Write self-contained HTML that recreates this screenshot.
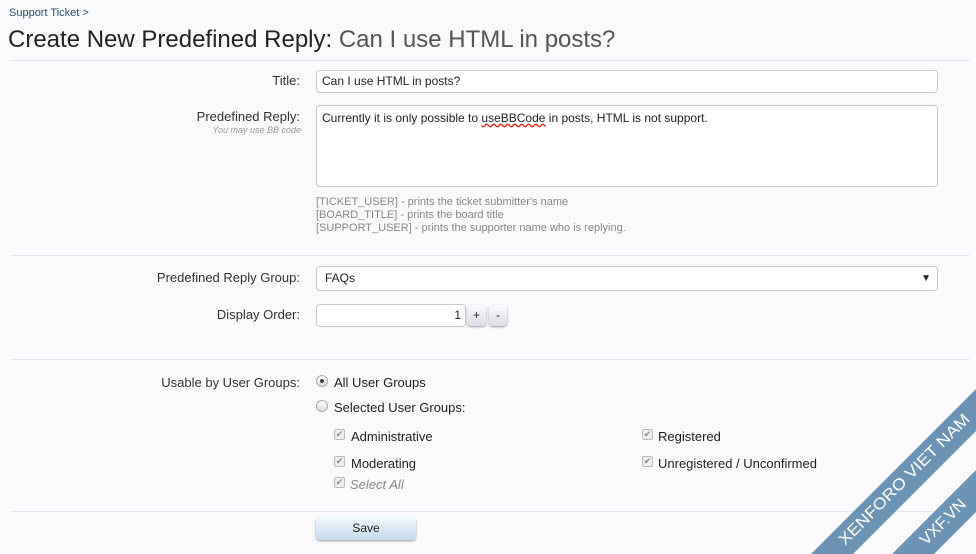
<!DOCTYPE html>
<html><head><meta charset="utf-8"><style>
*{box-sizing:border-box;margin:0;padding:0}
body{width:976px;height:554px;overflow:hidden;background:#fafafd;font-family:"Liberation Sans",sans-serif;font-size:13px;color:#222;position:relative}
.a{position:absolute}
.lbl{position:absolute;right:676px;text-align:right;color:#333;font-size:13px}
.inp{position:absolute;background:#fff;border:1px solid #c8c8c8;border-radius:4px;font-size:12px;padding-left:5px}
.hr{position:absolute;left:10px;width:960px;height:1px;background:#dde8f0}
.help{position:absolute;left:316px;color:#888;font-size:11px;line-height:13px}
.cb{position:absolute;width:11px;height:11px;border:1px solid #bbb;border-radius:2px;background:#eee;color:#888;font-size:9px;line-height:9px;text-align:center}
.rd{position:absolute;width:12px;height:12px;border:1px solid #aaa;border-radius:50%;background:linear-gradient(#fff,#ddd)}
.t{position:absolute;font-size:13px;color:#222}
.btn{position:absolute;border-radius:4px;background:linear-gradient(#fafafe,#dcdce8);box-shadow:0 1px 2px #999;font-size:12px;text-align:center}
</style></head><body>
<div class="a" style="left:9px;top:7px;font-size:11px;color:#1e4e79">Support Ticket &gt;</div>
<div class="a" style="left:8px;top:26px;font-size:24px;color:#222;white-space:nowrap">Create New Predefined Reply: <span style="color:#555">Can I use HTML in posts?</span></div>
<div class="hr" style="top:60px"></div>
<div class="lbl" style="top:73px">Title:</div>
<div class="inp" style="left:316px;top:70px;width:622px;height:23px;line-height:21px">Can I use HTML in posts?</div>
<div class="lbl" style="top:109px">Predefined Reply:</div>
<div class="a" style="right:675px;top:125px;font-size:9px;font-style:italic;color:#999">You may use BB code</div>
<div class="inp" style="left:316px;top:105px;width:622px;height:82px;padding-top:5px;line-height:14px">Currently it is only possible to <span style="text-decoration:underline wavy red">useBBCode</span> in posts, HTML is not support.</div>
<div class="help" style="top:196px">[TICKET_USER] - prints the ticket submitter's name<br>[BOARD_TITLE] - prints the board title<br>[SUPPORT_USER] - prints the supporter name who is replying.</div>
<div class="hr" style="top:255px"></div>
<div class="lbl" style="top:270px">Predefined Reply Group:</div>
<div class="inp" style="left:316px;top:266px;width:622px;height:25px;line-height:23px;padding-left:8px">FAQs<span style="position:absolute;right:6px;font-size:10px">▼</span></div>
<div class="lbl" style="top:307px">Display Order:</div>
<div class="inp" style="left:316px;top:304px;width:150px;height:23px;line-height:21px;text-align:right;padding-right:4px">1</div>
<div class="btn" style="left:467px;top:305px;width:19px;height:21px;line-height:21px">+</div>
<div class="btn" style="left:489px;top:305px;width:18px;height:21px;line-height:21px">-</div>
<div class="hr" style="top:359px"></div>
<div class="lbl" style="top:375px">Usable by User Groups:</div>
<div class="rd" style="left:316px;top:375px"><div style="width:4px;height:4px;border-radius:50%;background:#444;margin:3px"></div></div>
<div class="t" style="left:334px;top:375px">All User Groups</div>
<div class="rd" style="left:316px;top:400px"></div>
<div class="t" style="left:334px;top:400px">Selected User Groups:</div>
<div class="cb" style="left:334px;top:429px">✔</div><div class="t" style="left:351px;top:429px">Administrative</div>
<div class="cb" style="left:642px;top:429px">✔</div><div class="t" style="left:658px;top:429px">Registered</div>
<div class="cb" style="left:334px;top:456px">✔</div><div class="t" style="left:351px;top:456px">Moderating</div>
<div class="cb" style="left:642px;top:456px">✔</div><div class="t" style="left:658px;top:456px">Unregistered / Unconfirmed</div>
<div class="cb" style="left:334px;top:477px">✔</div><div class="t" style="left:350px;top:477px;font-style:italic;color:#888">Select All</div>
<div class="hr" style="top:511px"></div>
<div class="btn" style="left:316px;top:517px;width:100px;height:23px;line-height:22px;background:linear-gradient(#f4f8fc,#c6dbee)">Save</div>
<svg class="a" style="left:0;top:0" width="976" height="554">
<polygon points="811,554 976,389 976,431 853,554" fill="#6c93b3"/>
<polygon points="892,554 976,470 976,512 934,554" fill="#6c93b3"/>
<text transform="translate(845,546) rotate(-45)" fill="#fff" font-family="Liberation Sans,sans-serif" font-size="16" textLength="178" lengthAdjust="spacingAndGlyphs">XENFORO VIET NAM</text>
<text transform="translate(926,546) rotate(-45)" fill="#fff" font-family="Liberation Sans,sans-serif" font-size="16" textLength="58" lengthAdjust="spacingAndGlyphs">VXF.VN</text>
</svg>
</body></html>
